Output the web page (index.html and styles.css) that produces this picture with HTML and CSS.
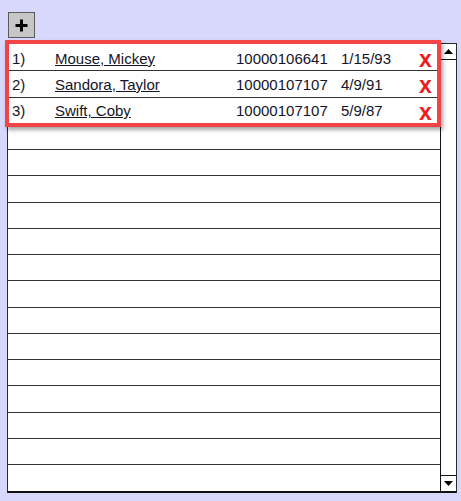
FILE: index.html
```html
<!DOCTYPE html>
<html>
<head>
<meta charset="utf-8">
<link rel="stylesheet" href="styles.css">
</head>
<body>
<div class="page">
  <button class="add-btn" aria-label="Add">
    <svg width="15" height="15" viewBox="0 0 15 15"><path d="M7.5 1.5v12M1.5 7.5h12" stroke="#000" stroke-width="3"/></svg>
  </button>
  <div class="list">
    <div class="rows">
      <div class="row"><span class="num">1)</span><a class="name">Mouse, Mickey</a><span class="id">10000106641</span><span class="date">1/15/93</span><span class="del">x</span></div>
      <div class="row"><span class="num">2)</span><a class="name">Sandora, Taylor</a><span class="id">10000107107</span><span class="date">4/9/91</span><span class="del">x</span></div>
      <div class="row"><span class="num">3)</span><a class="name">Swift, Coby</a><span class="id">10000107107</span><span class="date">5/9/87</span><span class="del">x</span></div>
      <div class="row"></div>
      <div class="row"></div>
      <div class="row"></div>
      <div class="row"></div>
      <div class="row"></div>
      <div class="row"></div>
      <div class="row"></div>
      <div class="row"></div>
      <div class="row"></div>
      <div class="row"></div>
      <div class="row"></div>
      <div class="row"></div>
      <div class="row"></div>
      <div class="row"></div>
    </div>
    <div class="scrollbar">
      <div class="sb-btn sb-up"><svg width="9" height="5" viewBox="0 0 9 5"><path d="M0 5L4.5 0L9 5Z" fill="#000"/></svg></div>
      <div class="sb-track"></div>
      <div class="sb-btn sb-down"><svg width="9" height="5" viewBox="0 0 9 5"><path d="M0 0L4.5 5L9 0Z" fill="#000"/></svg></div>
    </div>
    <div class="highlight"></div>
  </div>
</div>
</body>
</html>
```

FILE: styles.css
```css
html, body {
  margin: 0;
  padding: 0;
  background: #d8d8fd;
  font-family: "Liberation Sans", Arial, sans-serif;
}
.page {
  padding: 12px 0 0 7px;
  display: flex;
  flex-direction: column;
  align-items: flex-start;
}
.add-btn {
  margin-left: 1px;
  width: 27px;
  height: 26px;
  padding: 0;
  background: #c6c6c6;
  border: 1px solid #5a5a5a;
  display: flex;
  align-items: center;
  justify-content: center;
}
.list {
  position: relative;
  margin-top: 5px;
  width: 448px;
  display: flex;
  background: #fff;
  border: 1px solid #2a2a2a;
  border-bottom: 2px solid #111;
  box-shadow: 0 1px 0 #555;
}
.rows {
  width: 433px;
  padding-top: 1px;
  display: flex;
  flex-direction: column;
}
.row {
  box-sizing: border-box;
  height: 26.25px;
  padding-bottom: 2px;
  border-bottom: 1px solid #333;
  display: grid;
  grid-template-columns: 43px 181px 105px 78px 1fr;
  align-items: center;
  padding-left: 4px;
  font-size: 15px;
  color: #141428;
}
.row:last-child {
  border-bottom: none;
}
.name {
  text-decoration: underline;
  color: #141428;
}
.del {
  color: #ee1c1c;
  font-weight: bold;
  font-size: 23px;
  line-height: 1;
  margin-top: 3px;
}
.scrollbar {
  width: 15px;
  border-left: 1px solid #111;
  display: flex;
  flex-direction: column;
}
.sb-btn {
  height: 15px;
  display: flex;
  align-items: center;
  justify-content: center;
  background: #fff;
}
.sb-up {
  border-bottom: 1px solid #111;
}
.sb-down {
  border-top: 1px solid #111;
}
.sb-track {
  flex: 1;
}
.highlight {
  position: absolute;
  left: -3px;
  top: -4px;
  width: 428px;
  height: 79px;
  border: 4px solid #f24444;
  box-shadow: 2px 3px 4px rgba(0, 0, 0, 0.35);
  pointer-events: none;
}
```
